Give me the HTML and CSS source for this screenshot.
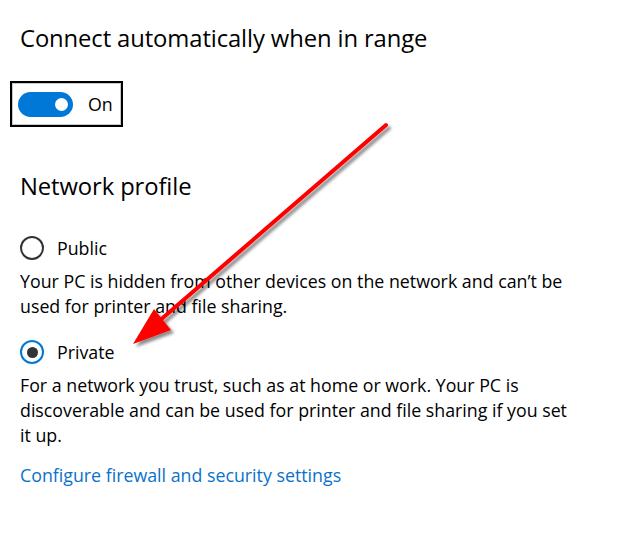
FILE: index.html
```html
<!DOCTYPE html>
<html lang="en">
<head>
<meta charset="utf-8">
<title>Network profile</title>
<link rel="stylesheet" href="styles.css">
</head>
<body>
<main class="settings">
  <h2 class="subhead first">Connect automatically when in range</h2>
  <div class="toggle-focus">
    <span class="switch"><span class="knob"></span></span>
    <span class="switch-label">On</span>
  </div>

  <h2 class="subhead">Network profile</h2>

  <div class="radio-row">
    <span class="radio"></span>
    <span class="radio-label">Public</span>
  </div>
  <p class="desc">Your PC is hidden from other devices on the network and can’t be used for printer and file sharing.</p>

  <div class="radio-row">
    <span class="radio checked"></span>
    <span class="radio-label">Private</span>
  </div>
  <p class="desc">For a network you trust, such as at home or work. Your PC is discoverable and can be used for printer and file sharing if you set it up.</p>

  <a class="link" href="#">Configure firewall and security settings</a>
</main>

<svg class="annotation" width="629" height="536" viewBox="0 0 629 536" aria-hidden="true">
  <defs>
    <filter id="shadow" x="-20%" y="-20%" width="140%" height="140%">
      <feGaussianBlur in="SourceAlpha" stdDeviation="1.6"/>
      <feOffset dx="3" dy="3" result="b"/>
      <feComponentTransfer><feFuncA type="linear" slope="0.45"/></feComponentTransfer>
      <feMerge><feMergeNode/><feMergeNode in="SourceGraphic"/></feMerge>
    </filter>
  </defs>
  <g filter="url(#shadow)">
    <line x1="386" y1="125" x2="158" y2="322" stroke="#ff0000" stroke-width="4" stroke-linecap="round"/>
    <polygon points="133,344 171,330 154,309" fill="#ff0000"/>
  </g>
</svg>
</body>
</html>
```

FILE: styles.css
```css
html, body {
  margin: 0;
  padding: 0;
  background: #ffffff;
}

body {
  font-family: "Segoe UI", "Open Sans", "Noto Sans", sans-serif;
  color: #000000;
  position: relative;
  width: 629px;
  height: 536px;
  overflow: hidden;
}

.settings {
  padding: 0 0 0 20px;
  width: 556px;
}

.subhead {
  font-weight: 400;
  font-size: 23.8px;
  line-height: 32px;
  margin: 0;
  letter-spacing: -0.1px;
}

.subhead.first {
  padding-top: 22px;
}

.toggle-focus {
  display: inline-flex;
  align-items: center;
  gap: 15px;
  height: 42px;
  padding: 0 8px 0 6px;
  margin: 27px 0 0 -10px;
  border: 2px solid #000000;
  box-shadow: inset 0 0 0 1px #c8c8c8;
}

.switch {
  position: relative;
  display: block;
  width: 55px;
  height: 25px;
  border-radius: 13px;
  background: #0078d7;
}

.knob {
  position: absolute;
  top: 6px;
  left: 37px;
  width: 13px;
  height: 13px;
  border-radius: 50%;
  background: #ffffff;
}

.switch-label {
  font-size: 17.8px;
  line-height: 20px;
}

.toggle-focus + .subhead {
  margin-top: 43px;
}

.radio-row {
  display: flex;
  align-items: center;
  gap: 13px;
  margin-top: 33px;
  height: 26px;
}

.desc + .radio-row {
  margin-top: 20px;
}

.radio {
  box-sizing: border-box;
  width: 24px;
  height: 24px;
  border-radius: 50%;
  border: 2.5px solid #333333;
  display: flex;
  align-items: center;
  justify-content: center;
}

.radio.checked {
  border-color: #0078d7;
}

.radio.checked::after {
  content: "";
  width: 11px;
  height: 11px;
  border-radius: 50%;
  background: #333333;
}

.radio-label {
  font-size: 17.8px;
  line-height: 24px;
}

.desc {
  margin: 8px 0 0;
  font-size: 17.8px;
  line-height: 25px;
}

.link {
  display: inline-block;
  margin-top: 15px;
  font-size: 17.8px;
  line-height: 25px;
  color: #0a72c8;
  text-decoration: none;
}

.annotation {
  position: absolute;
  left: 0;
  top: 0;
  pointer-events: none;
}
```
